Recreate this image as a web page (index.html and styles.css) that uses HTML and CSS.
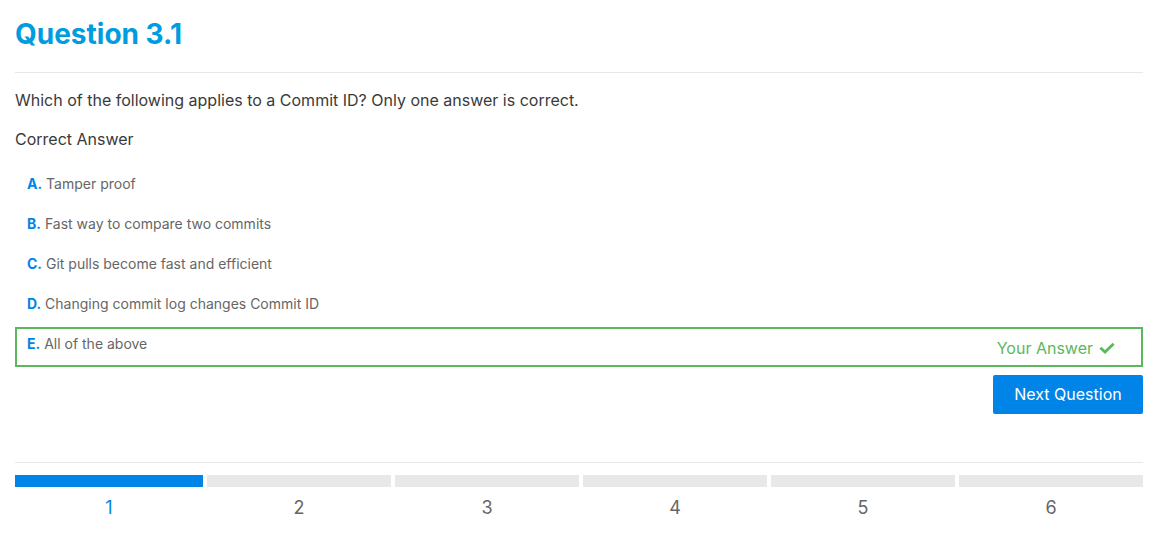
FILE: index.html
```html
<!DOCTYPE html>
<html lang="en">
<head>
<meta charset="utf-8">
<title>Question 3.1</title>
<link rel="stylesheet" href="styles.css">
</head>
<body>
<main class="quiz">
  <h1 class="title">Question 3.1</h1>
  <p class="prompt">Which of the following applies to a Commit ID? Only one answer is correct.</p>
  <p class="prompt">Correct Answer</p>
  <ul class="answers">
    <li class="answer"><span><b class="letter">A.</b> Tamper proof</span></li>
    <li class="answer"><span><b class="letter">B.</b> Fast way to compare two commits</span></li>
    <li class="answer"><span><b class="letter">C.</b> Git pulls become fast and efficient</span></li>
    <li class="answer"><span><b class="letter">D.</b> Changing commit log changes Commit ID</span></li>
    <li class="answer correct"><span><b class="letter">E.</b> All of the above</span>
      <span class="verdict">Your Answer
        <svg class="check" viewBox="0 0 16 12" aria-hidden="true"><path d="M1.4 5.7 6 10 14.6 1.7" fill="none" stroke="currentColor" stroke-width="2.8"/></svg>
      </span>
    </li>
  </ul>
  <div class="actions"><button class="next" type="button">Next Question</button></div>
  <nav aria-label="Questions">
    <ol class="progress">
      <li class="slot"><a class="step current" href="#q1" aria-current="step">1</a></li>
      <li class="slot"><a class="step" href="#q2">2</a></li>
      <li class="slot"><a class="step" href="#q3">3</a></li>
      <li class="slot"><a class="step" href="#q4">4</a></li>
      <li class="slot"><a class="step" href="#q5">5</a></li>
      <li class="slot"><a class="step" href="#q6">6</a></li>
    </ol>
  </nav>
</main>
</body>
</html>
```
FILE: styles.css
```css
* {
  box-sizing: border-box;
}

body {
  margin: 0;
  background: #fff;
  color: #3a3a3a;
  font: 16px/24px Inter, sans-serif;
}

.quiz {
  padding: 15px 20px 15px 15px;
}

.title {
  margin: 0 0 15px;
  padding-bottom: 19px;
  border-bottom: 1px solid #e8e8e8;
  color: #009ce0;
  font-size: 28px;
  line-height: 38px;
  font-weight: 700;
}

.prompt {
  margin: 0 0 15px;
}

.answers {
  margin: 16px 0 0;
  padding: 0;
  list-style: none;
}

.answer {
  display: flex;
  justify-content: space-between;
  align-items: flex-start;
  height: 40px;
  padding: 5px 26px 0 10px;
  border: 2px solid transparent;
  color: #666;
  font-size: 14px;
  line-height: 20px;
}

.correct {
  border-color: #5cb85c;
}

.letter {
  color: #0084e7;
  font-weight: 700;
}

.verdict {
  display: flex;
  align-items: center;
  gap: 6px;
  color: #5cb85c;
  font-size: 16px;
  line-height: 28px;
}

.check {
  width: 16px;
  height: 12px;
}

.actions {
  display: flex;
  justify-content: flex-end;
  margin: 8px 0 48px;
}

.next {
  min-width: 150px;
  padding: 7px 21px 8px;
  border: 0;
  border-radius: 2px;
  background: #0084e7;
  color: #fff;
  font: inherit;
}

.progress {
  display: grid;
  grid-template-columns: repeat(6, 1fr);
  margin: 0;
  padding: 12px 0 0;
  border-top: 1px solid #e8e8e8;
  list-style: none;
}

.slot + .slot {
  padding-left: 4px;
}

.step {
  display: block;
  padding-top: 8px;
  border-top: 12px solid #e8e8e8;
  color: #666;
  font-size: 18px;
  line-height: 26px;
  text-align: center;
  text-decoration: none;
}

.current {
  border-color: #0084e7;
  color: #0084e7;
}
```
